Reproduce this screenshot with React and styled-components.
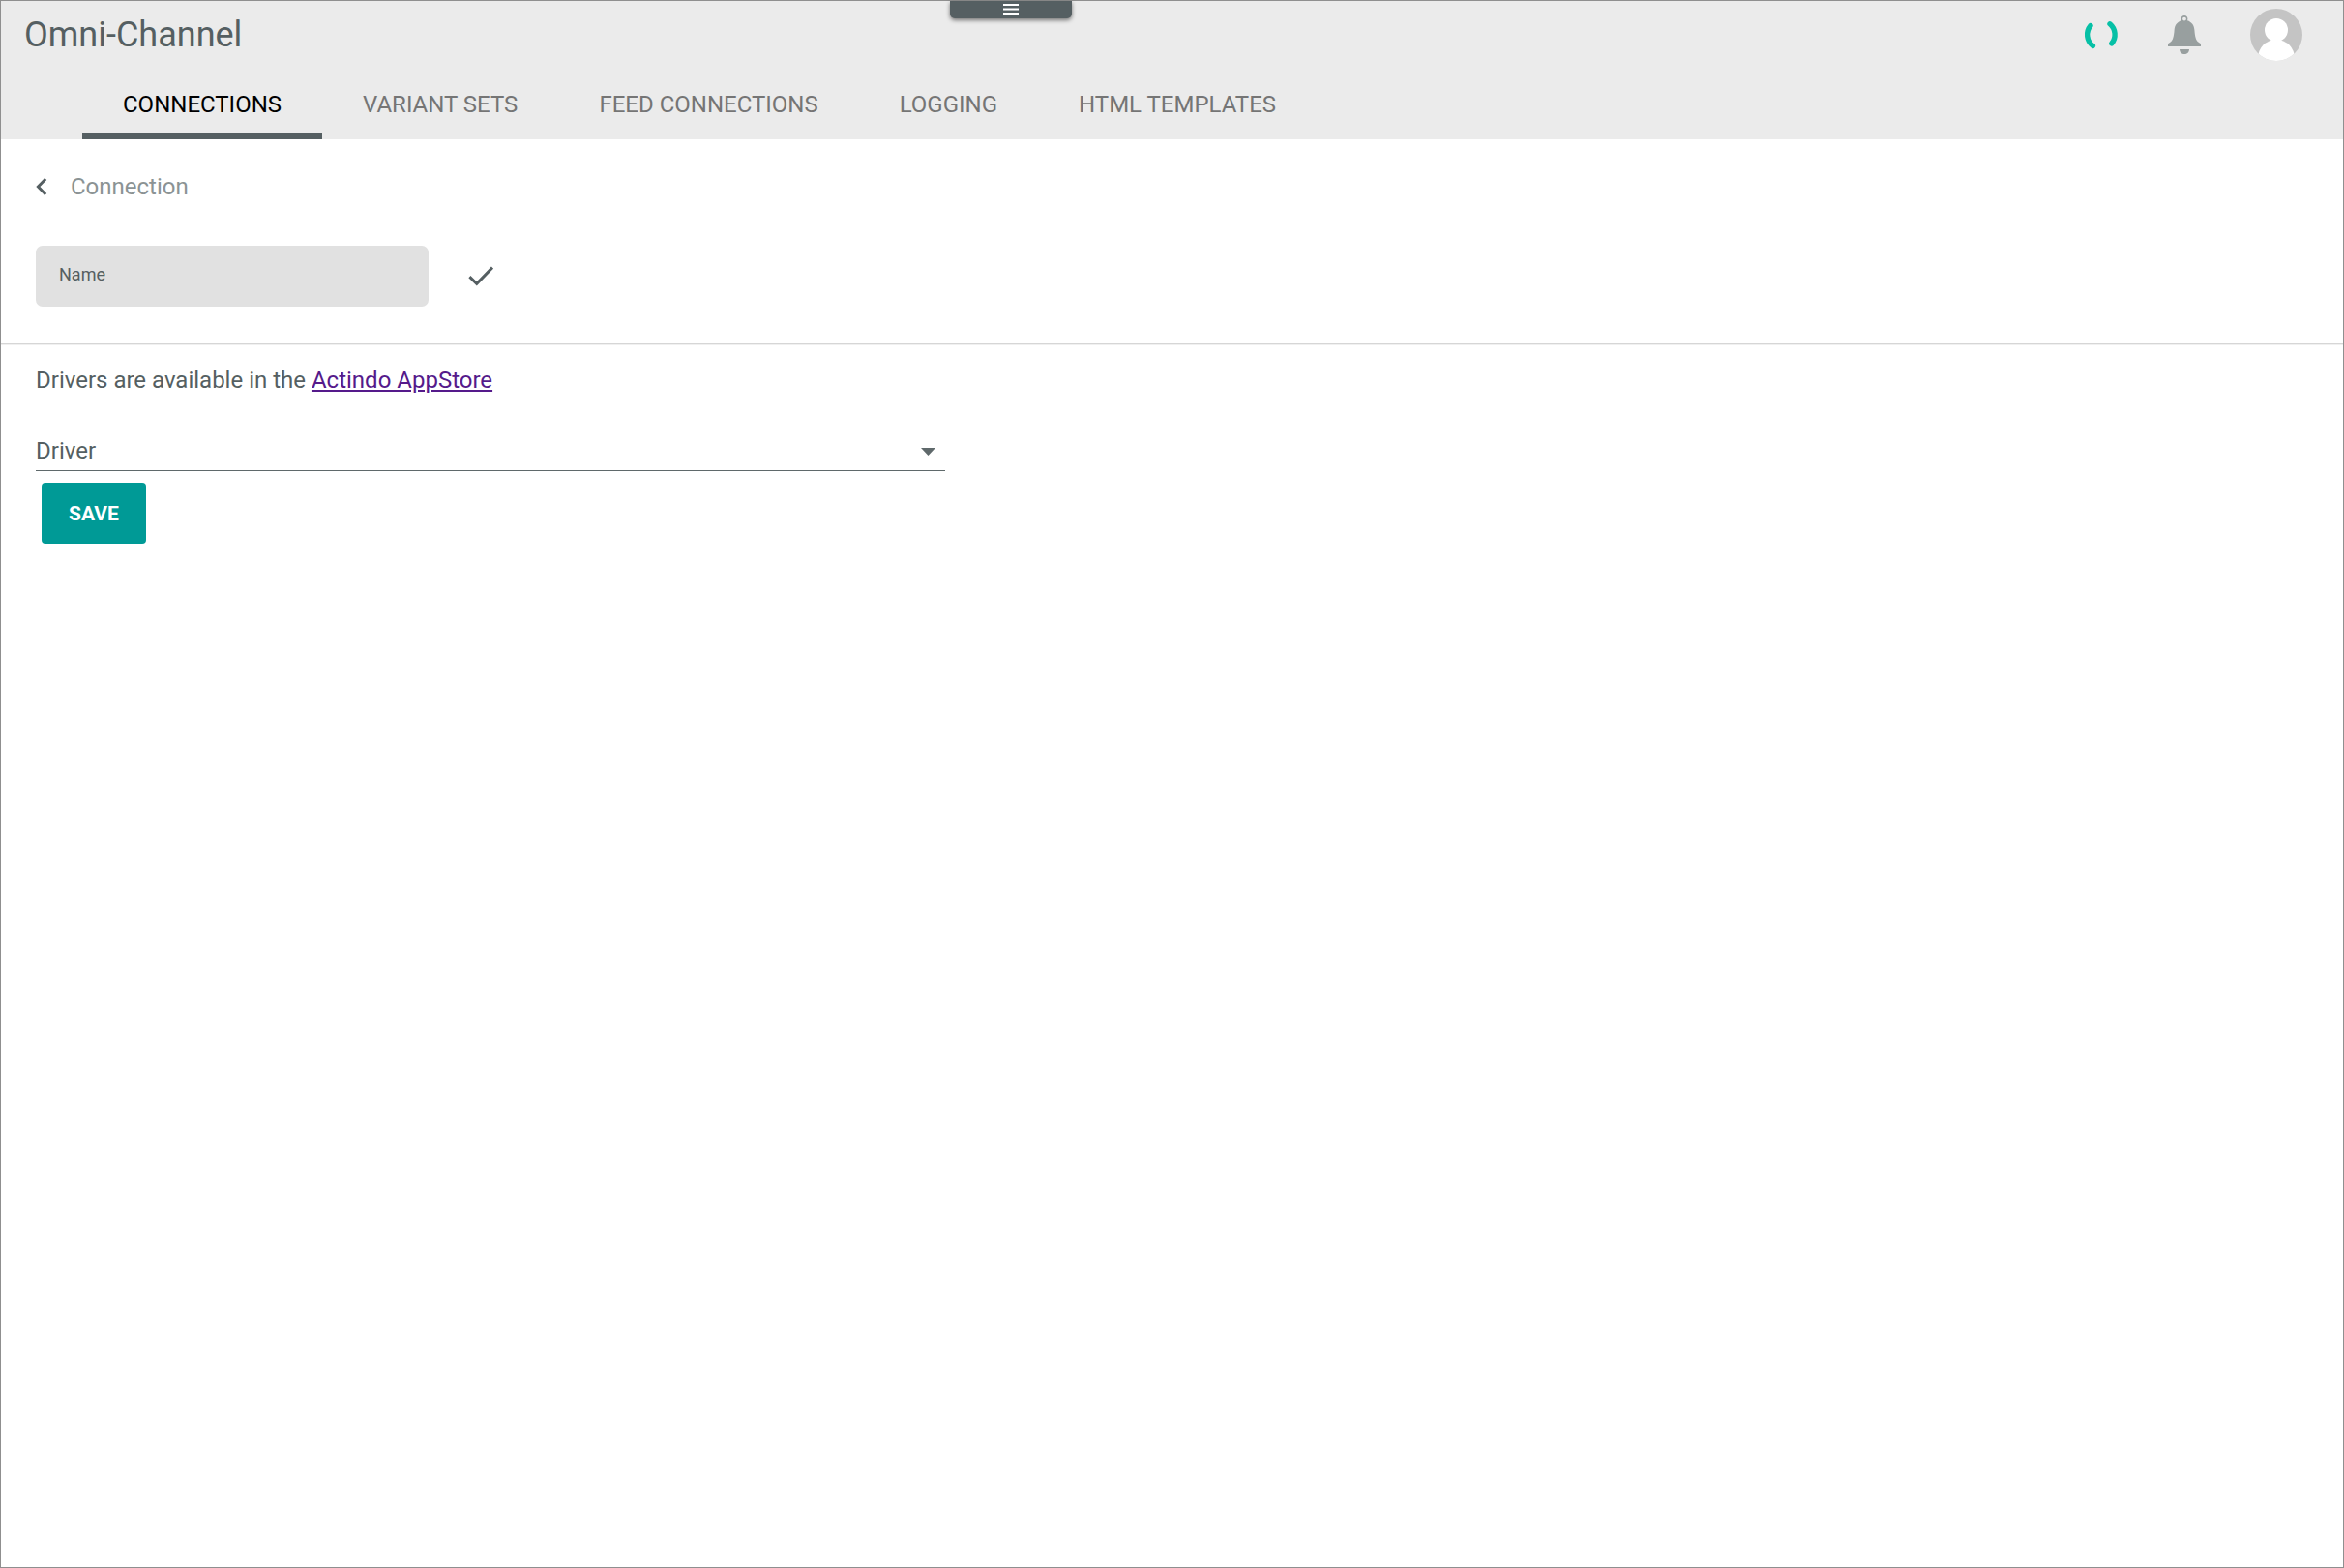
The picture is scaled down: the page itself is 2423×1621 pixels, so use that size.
import React, { useState } from "react";
import styled, { createGlobalStyle } from "styled-components";

const TABS = [
  "Connections",
  "Variant Sets",
  "Feed Connections",
  "Logging",
  "HTML Templates",
];

const App = () => {
  const [activeTab, setActiveTab] = useState("Connections");
  const [name, setName] = useState("");
  const [driver, setDriver] = useState("");

  return (
    <>
      <GlobalStyle />
      <Page>
        <MenuHandle type="button" aria-label="Menu">
          <svg width="16" height="11" viewBox="0 0 16 11" fill="#fff">
            <rect width="16" height="2" />
            <rect y="4.5" width="16" height="2" />
            <rect y="9" width="16" height="2" />
          </svg>
        </MenuHandle>

        <Header>
          <TopBar>
            <Title>Omni-Channel</Title>
            <Actions>
              <IconButton type="button" aria-label="Activity">
                <SpinnerIcon />
              </IconButton>
              <IconButton type="button" aria-label="Notifications">
                <BellIcon />
              </IconButton>
              <IconButton type="button" aria-label="Account">
                <AvatarIcon />
              </IconButton>
            </Actions>
          </TopBar>
          <Tabs>
            {TABS.map((tab) => (
              <Tab
                key={tab}
                type="button"
                $active={tab === activeTab}
                onClick={() => setActiveTab(tab)}
              >
                {tab}
              </Tab>
            ))}
          </Tabs>
        </Header>

        <NameSection>
          <BackRow>
            <IconButton type="button" aria-label="Back">
              <svg width="14" height="20" viewBox="0 0 14 20" fill="none">
                <path d="M10.2 2 2.4 10l7.8 8" stroke="#555f62" strokeWidth="3" />
              </svg>
            </IconButton>
            <Crumb>Connection</Crumb>
          </BackRow>
          <NameRow>
            <NameField>
              <label htmlFor="name">Name</label>
              <NameInput
                id="name"
                value={name}
                onChange={(e) => setName(e.target.value)}
              />
            </NameField>
            <IconButton type="button" aria-label="Confirm name">
              <svg width="26" height="21" viewBox="0 0 26 21" fill="none">
                <path
                  d="M1.4 11.2 8.8 18.4 25 1.6"
                  stroke="#555f62"
                  strokeWidth="3"
                />
              </svg>
            </IconButton>
          </NameRow>
        </NameSection>

        <DriverSection>
          <Hint>
            Drivers are available in the <a href="#appstore">Actindo AppStore</a>
          </Hint>
          <DriverField>
            <label htmlFor="driver">Driver</label>
            <DriverSelect
              id="driver"
              value={driver}
              onChange={(e) => setDriver(e.target.value)}
            >
              <option value=""></option>
            </DriverSelect>
            <Caret width="15" height="8" viewBox="0 0 15 8">
              <path d="M0 0h15L7.5 8z" fill="#5f696b" />
            </Caret>
          </DriverField>
          <SaveButton type="button">Save</SaveButton>
        </DriverSection>
      </Page>
    </>
  );
};

export default App;

const SpinnerIcon = () => (
  <svg width="36" height="36" viewBox="0 0 36 36" fill="none">
    <g stroke="#06c0a6" strokeWidth="5.4" strokeLinecap="round">
      <path d="M7 8.6A14.4 14.4 0 0 0 9.4 29.4" />
      <path d="M27 6.8A14.4 14.4 0 0 1 28.8 27" />
    </g>
  </svg>
);

const BellIcon = () => (
  <svg width="34" height="40" viewBox="0 0 34 40" fill="#989f9f">
    <path
      fillRule="evenodd"
      d="M17 0c2 0 3.400 1.400 3.400 3.300 0 .8-.1 1.300-.4 1.900C24.500 6.600 27 10 27.400 15c.5 7 1.600 10.500 3.600 12.300.8.800 3 1.300 3 2.700v2H0v-2c0-1.400 2.200-1.900 3-2.700C5 25.500 6.100 22 6.600 15 7 10 9.500 6.600 14 5.200c-.3-.6-.4-1.100-.4-1.900C13.600 1.400 15 0 17 0zm0 1.700a1.900 1.900 0 1 0 0 3.800a1.900 1.900 0 1 0 0-3.800z"
    />
    <path d="M12 35h10c0 3-2.200 5-5 5s-5-2-5-5z" />
  </svg>
);

const AvatarIcon = () => (
  <svg width="54" height="54" viewBox="0 0 54 54">
    <clipPath id="avatar">
      <circle cx="27" cy="27" r="27" />
    </clipPath>
    <g clipPath="url(#avatar)">
      <rect width="54" height="54" fill="#c4c4c4" />
      <circle cx="27" cy="22" r="12" fill="#fff" />
      <ellipse cx="27" cy="51" rx="19" ry="19" fill="#fff" />
    </g>
  </svg>
);

const GlobalStyle = createGlobalStyle`
  * {
    box-sizing: border-box;
  }
  body {
    margin: 0;
    background: #fff;
    color: #555f62;
    font-family: Roboto, "Liberation Sans", sans-serif;
    font-size: 24px;
    line-height: 28px;
  }
  button,
  input,
  select {
    font: inherit;
    color: inherit;
  }
  svg {
    display: block;
  }
`;

const Page = styled.div`
  position: relative;
  min-height: 100vh;
  border: 1px solid #8f8f8f;
`;

const MenuHandle = styled.button`
  position: absolute;
  top: 0;
  left: 981px;
  display: flex;
  justify-content: center;
  width: 126px;
  height: 18px;
  padding: 3px 0 0;
  border: none;
  border-radius: 0 0 5px 5px;
  background: #555f62;
  box-shadow: 0 2px 4px rgba(0, 0, 0, 0.5);
  cursor: pointer;
`;

const Header = styled.header`
  background: #ebebeb;
`;

const TopBar = styled.div`
  display: flex;
  align-items: center;
  justify-content: space-between;
  height: 70px;
  padding: 0 42px 0 24px;
`;

const Title = styled.h1`
  margin: 0;
  font-size: 36px;
  line-height: 42px;
  font-weight: 400;
`;

const Actions = styled.div`
  display: flex;
  align-items: center;
  gap: 51px;
`;

const IconButton = styled.button`
  padding: 0;
  border: none;
  background: none;
  cursor: pointer;
`;

const Tabs = styled.nav`
  display: flex;
  padding-left: 84px;
`;

const Tab = styled.button`
  height: 73px;
  padding: 6px 42px 0;
  border: none;
  border-bottom: 6px solid ${({ $active }) => ($active ? "#555f62" : "transparent")};
  background: none;
  color: ${({ $active }) => ($active ? "#000" : "#757575")};
  text-transform: uppercase;
  cursor: pointer;
`;

const NameSection = styled.section`
  padding: 31px 36px 38px;
  border-bottom: 1px solid #d6d6d6;
  box-shadow: 0 1px 0 #f0f0f0;
`;

const BackRow = styled.div`
  display: flex;
  align-items: center;
  gap: 22px;
  height: 36px;
`;

const Crumb = styled.span`
  color: #8b9394;
`;

const NameRow = styled.div`
  display: flex;
  align-items: center;
  gap: 41px;
  margin-top: 43px;
`;

const NameField = styled.div`
  display: flex;
  align-items: center;
  gap: 12px;
  width: 406px;
  height: 63px;
  padding: 0 24px 4px;
  border-radius: 7px;
  background: #e1e1e1;
  font-size: 18px;
`;

const NameInput = styled.input`
  flex: 1;
  min-width: 0;
  border: none;
  outline: none;
  background: none;
`;

const DriverSection = styled.section`
  padding: 23px 36px;
`;

const Hint = styled.p`
  margin: 0;

  a {
    color: #551a8b;
  }
`;

const DriverField = styled.div`
  position: relative;
  display: flex;
  align-items: center;
  gap: 12px;
  width: 40%;
  height: 42px;
  margin-top: 38px;
  border-bottom: 1px solid #5f696b;
`;

const DriverSelect = styled.select`
  flex: 1;
  min-width: 0;
  border: none;
  outline: none;
  background: none;
  appearance: none;
  cursor: pointer;
`;

const Caret = styled.svg`
  position: absolute;
  top: 18px;
  right: 10px;
  pointer-events: none;
`;

const SaveButton = styled.button`
  height: 63px;
  margin: 12px 0 0 6px;
  padding: 0 28px;
  border: none;
  border-radius: 4px;
  background: #009a96;
  color: #fff;
  font-size: 21px;
  font-weight: 700;
  text-transform: uppercase;
  cursor: pointer;
`;
